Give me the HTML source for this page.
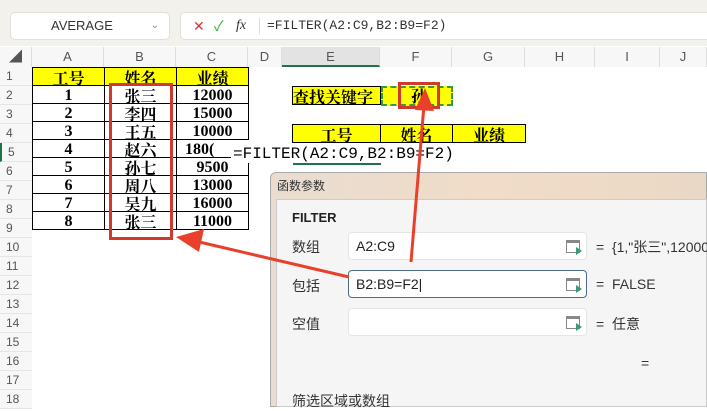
<!DOCTYPE html>
<html><head><meta charset="utf-8"><style>
*{margin:0;padding:0;box-sizing:border-box}
body{width:707px;height:407px;overflow:hidden;background:#fff;position:relative;font-family:"Liberation Sans","Noto Sans CJK SC",sans-serif}
.abs{position:absolute}
.top{left:0;top:0;width:707px;height:46px;background:#f3f1ec}
.box{background:#fff;border-radius:5px;border:1px solid #e2e0db}
.colh{top:47px;height:20px;font-size:13px;color:#555;text-align:center;line-height:20px;border-right:1px solid #ddd;background:#f7f7f7}
.rowh{left:0;width:32px;height:19px;font-size:12px;color:#555;line-height:19px;text-align:left;padding-left:6px;background:#f7f7f7;border-bottom:1px solid #e5e5e5}
.c{height:19px;font-family:"Liberation Serif","Noto Serif CJK SC",serif;font-size:16px;font-weight:bold;text-align:center;line-height:19px;border:1px solid #000;margin:-1px 0 0 -1px}
.y{background:#ffff00;font-weight:bold}
.cn{font-family:"Noto Serif CJK SC",serif}
.inp{left:348px;width:239px;height:28px;background:#fff;border:1px solid #e6e6e6;border-radius:4px;font-size:14px;line-height:26px;padding-left:7px;color:#222}
.ico{position:absolute;right:6px;top:7px;width:14px;height:13px;border:1px solid #888;border-top-width:3px}
.ico:after{content:"";position:absolute;right:-3px;bottom:-3px;border-left:6px solid #3a9a7a;border-top:4px solid transparent;border-bottom:4px solid transparent}
.lbl{font-size:14px;color:#333}
</style></head><body>
<div class="abs top"></div>
<div class="abs box" style="left:10px;top:12px;width:160px;height:28px;font-size:13px;line-height:26px;padding-left:40px;color:#333">AVERAGE<span style="position:absolute;right:10px;color:#888;font-size:10px">⌄</span></div>
<div class="abs box" style="left:180px;top:12px;width:540px;height:28px;font-size:14px;line-height:26px;color:#333">
<span style="position:absolute;left:12px;color:#d33">✕</span><span style="position:absolute;left:33px;color:#3a3">✓</span><span style="position:absolute;left:55px;font-style:italic;font-family:'Liberation Serif',serif">fx</span>
<span style="position:absolute;left:78px;top:5px;height:16px;border-left:1px solid #ddd"></span>
<span style="position:absolute;left:86px;font-family:'Liberation Mono',monospace;font-size:13px">=FILTER(A2:C9,B2:B9=F2)</span></div>
<div class="abs" style="left:0;top:47px;width:707px;height:20px;background:#f7f7f7;border-bottom:1px solid #ddd"></div>
<div class="abs colh" style="left:0;width:32px">◢</div>
<div class="abs colh" style="left:32px;width:72px">A</div>
<div class="abs colh" style="left:104px;width:72px">B</div>
<div class="abs colh" style="left:176px;width:72px">C</div>
<div class="abs colh" style="left:248px;width:34px">D</div>
<div class="abs colh" style="left:282px;width:98px;background:#e3e3e3;border-bottom:2px solid #217346">E</div>
<div class="abs colh" style="left:380px;width:72px">F</div>
<div class="abs colh" style="left:452px;width:73px">G</div>
<div class="abs colh" style="left:525px;width:70px">H</div>
<div class="abs colh" style="left:595px;width:65px">I</div>
<div class="abs colh" style="left:660px;width:47px">J</div>
<div class="abs rowh" style="top:67px">1</div><div class="abs rowh" style="top:86px">2</div><div class="abs rowh" style="top:105px">3</div><div class="abs rowh" style="top:124px">4</div><div class="abs rowh" style="top:143px;border-left:2px solid #217346">5</div><div class="abs rowh" style="top:162px">6</div><div class="abs rowh" style="top:181px">7</div><div class="abs rowh" style="top:200px">8</div><div class="abs rowh" style="top:219px">9</div><div class="abs rowh" style="top:238px">10</div><div class="abs rowh" style="top:257px">11</div><div class="abs rowh" style="top:276px">12</div><div class="abs rowh" style="top:295px">13</div><div class="abs rowh" style="top:314px">14</div><div class="abs rowh" style="top:333px">15</div><div class="abs rowh" style="top:352px">16</div><div class="abs rowh" style="top:371px">17</div><div class="abs rowh" style="top:390px">18</div>
<div class="abs" style="left:33px;top:68px;display:grid;grid-template-columns:72px 72px 72px">
<div class="c y cn">工号</div><div class="c y cn">姓名</div><div class="c y cn">业绩</div>
<div class="c">1</div><div class="c cn">张三</div><div class="c">12000</div>
<div class="c">2</div><div class="c cn">李四</div><div class="c">15000</div>
<div class="c">3</div><div class="c cn">王五</div><div class="c">10000</div>
<div class="c">4</div><div class="c cn">赵六</div><div class="c" style="text-align:left;padding-left:8px;border-right:none">180(</div>
<div class="c">5</div><div class="c cn">孙七</div><div class="c">9500</div>
<div class="c">6</div><div class="c cn">周八</div><div class="c">13000</div>
<div class="c">7</div><div class="c cn">吴九</div><div class="c">16000</div>
<div class="c">8</div><div class="c cn">张三</div><div class="c">11000</div>
</div>
<div class="abs" style="left:109px;top:83px;width:64px;height:157px;border:3px solid #d0392b"></div>
<div class="abs c y cn" style="left:293px;top:87px;width:89px;text-align:left;font-size:16px">查找关键字</div>
<div class="abs" style="left:381px;top:86px;width:72px;height:20px;background:#ff0;border:2px dashed #3a9a3a"></div>
<div class="abs cn" style="left:398px;top:82px;width:42px;height:27px;border:3px solid #d0392b;font-weight:bold;font-size:16px;text-align:center;line-height:21px">孙</div>
<div class="abs" style="left:293px;top:125px;display:grid;grid-template-columns:88px 72px 73px">
<div class="c y cn">工号</div><div class="c y cn">姓名</div><div class="c y cn">业绩</div></div>
<div class="abs" style="left:231px;top:145px;font-family:'Liberation Mono',monospace;font-size:16px;background:#fff;padding:0 2px">=FILTER(A2:C9,B2:B9=F2)</div>
<div class="abs" style="left:293px;top:163px;width:88px;border-top:2px solid #217346"></div>
<div class="abs" style="left:270px;top:172px;width:437px;height:235px;background:linear-gradient(90deg,#e9ddd1,#f0dcc8 50%,#ead8c6);border:1px solid #aaa;border-radius:6px 0 0 0"></div>
<div class="abs" style="left:277px;top:177px;font-size:12px;color:#333">函数参数</div>
<div class="abs" style="left:276px;top:199px;width:431px;height:208px;background:#f5f5f5;border:1px solid #ccc"></div>
<div class="abs" style="left:292px;top:210px;font-size:13px;font-weight:bold;color:#222">FILTER</div>
<div class="abs lbl" style="left:292px;top:237px">数组</div>
<div class="abs lbl" style="left:292px;top:276px">包括</div>
<div class="abs lbl" style="left:292px;top:314px">空值</div>
<div class="abs inp" style="top:232px">A2:C9<div class="ico"></div></div>
<div class="abs inp" style="top:270px;border-color:#4a6a8a">B2:B9=F2|<div class="ico"></div></div>
<div class="abs inp" style="top:308px"><div class="ico"></div></div>
<div class="abs lbl" style="left:596px;top:237px;white-space:nowrap">=&nbsp; {1,"张三",12000</div>
<div class="abs lbl" style="left:596px;top:276px">=&nbsp; FALSE</div>
<div class="abs lbl" style="left:596px;top:314px">=&nbsp; 任意</div>
<div class="abs lbl" style="left:641px;top:355px">=</div>
<div class="abs lbl" style="left:292px;top:391px">筛选区域或数组</div>
<svg class="abs" style="left:0;top:0" width="707" height="407">
<line x1="349" y1="277" x2="195" y2="241" stroke="#e8402a" stroke-width="3"/>
<polygon points="176,237 204,229 199,252" fill="#e8402a"/>
<line x1="411" y1="262" x2="424" y2="105" stroke="#e8402a" stroke-width="3"/>
<polygon points="425,88 415,110 434,111" fill="#e8402a"/>
</svg>
</body></html>
